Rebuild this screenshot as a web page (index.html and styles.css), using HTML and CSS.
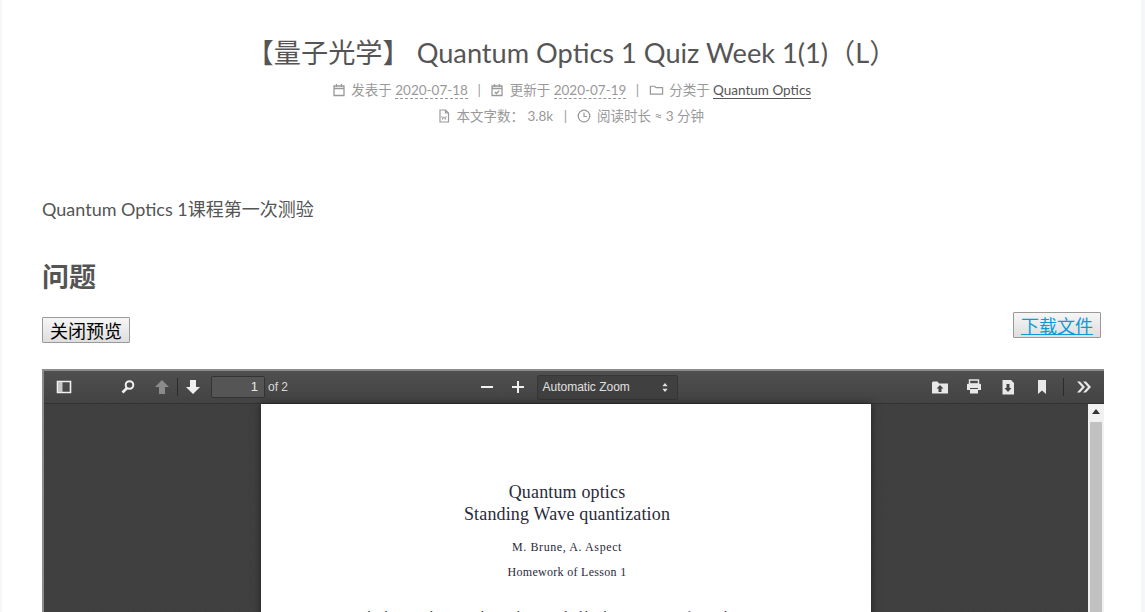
FILE: index.html
```html
<!DOCTYPE html>
<html lang="en">
<head>
  <meta charset="UTF-8">
  <meta name="viewport" content="width=device-width, initial-scale=1.0">
  <title>Quantum Optics 1 Quiz Week 1(1)</title>
  <link rel="stylesheet" href="styles.css">
</head>
<body>
  <main class="post">
    <!-- post header -->
    <header class="post-header">
      <h1>【量子光学】 Quantum Optics 1 Quiz Week 1(1)（L）</h1>
      <div class="meta">
        <span class="meta-item">
          <svg class="meta-icon" viewBox="0 0 14 14"><path d="M2 3h10v9.500H2zM2 5.500h10M4.500 1v3M9.500 1v3" fill="none" stroke="currentColor" stroke-width="1.300"/></svg>
          <span>发表于</span> <a class="date-link">2020-07-18</a>
        </span>
        <span class="meta-sep">|</span>
        <span class="meta-item">
          <svg class="meta-icon" viewBox="0 0 14 14"><path d="M2 3h10v9.500H2zM2 5.500h10M4.500 1v3M9.500 1v3M4.800 9l1.600 1.500 2.800-2.800" fill="none" stroke="currentColor" stroke-width="1.300"/></svg>
          <span>更新于</span> <a class="date-link">2020-07-19</a>
        </span>
        <span class="meta-sep">|</span>
        <span class="meta-item">
          <svg class="meta-icon wide" viewBox="0 0 16 14"><path d="M1.500 3h4.500l1.500 1.500h7v7h-13z" fill="none" stroke="currentColor" stroke-width="1.300"/></svg>
          <span>分类于</span> <a class="cat-link">Quantum Optics</a>
        </span>
      </div>
      <div class="meta words">
        <span class="meta-item">
          <svg class="meta-icon" viewBox="0 0 14 14"><path d="M3 1h5.500L11.500 4v9H3zM8.500 1v3h3" fill="none" stroke="currentColor" stroke-width="1.200"/><path d="M4.800 7l.8 3.500.9-2.500h.9l.9 2.500.8-3.500" fill="none" stroke="currentColor" stroke-width=".8"/></svg>
          <span>本文字数： 3.8k</span>
        </span>
        <span class="meta-sep">|</span>
        <span class="meta-item">
          <svg class="meta-icon" viewBox="0 0 14 14"><circle cx="7" cy="7" r="5.800" fill="none" stroke="currentColor" stroke-width="1.300"/><path d="M7 3.500V7.500h3" fill="none" stroke="currentColor" stroke-width="1.200"/></svg>
          <span>阅读时长 ≈ 3 分钟</span>
        </span>
      </div>
    </header>

    <p class="intro">Quantum Optics 1课程第一次测验</p>
    <h2>问题</h2>

    <div class="file-actions">
      <button class="plain-btn" type="button">关闭预览</button>
      <button class="plain-btn download" type="button"><a>下载文件</a></button>
    </div>

    <!-- embedded pdf viewer -->
    <section class="viewer">
      <div class="toolbar">
        <div class="tool-group left">
          <svg class="tool sidebar-tool" viewBox="0 0 16 16"><path d="M1.500 2.500h13v11h-13z" fill="none" stroke="#f0f0f0" stroke-width="1.600"/><path d="M2 3h4.500v10H2z" fill="#c8c8c8"/></svg>
          <svg class="tool search-tool" viewBox="0 0 16 16"><circle cx="9.500" cy="6" r="3.800" fill="none" stroke="#f0f0f0" stroke-width="2"/><path d="M7 9l-4.500 4.500" stroke="#f0f0f0" stroke-width="2.600"/></svg>
          <svg class="tool arrow-tool dim" viewBox="0 0 16 16"><path d="M8 1l7 7h-4v7H5V8H1z" fill="#f0f0f0"/></svg>
          <span class="tool-sep"></span>
          <svg class="tool arrow-tool" viewBox="0 0 16 16"><path d="M8 15l7-7h-4V1H5v7H1z" fill="#f0f0f0"/></svg>
          <span class="page-input">1</span>
          <span class="page-count">of 2</span>
        </div>
        <div class="tool-group middle">
          <svg class="tool zoom-tool" viewBox="0 0 12 12"><path d="M0 6h12" stroke="#f0f0f0" stroke-width="2"/></svg>
          <span class="tool-sep faint"></span>
          <svg class="tool zoom-tool" viewBox="0 0 12 12"><path d="M0 6h12M6 0v12" stroke="#f0f0f0" stroke-width="2"/></svg>
          <div class="zoom-select">
            <span>Automatic Zoom</span>
            <svg class="select-arrows" viewBox="0 0 6 10"><path d="M3 0l3 3.500H0zM3 10L0 6.500h6z" fill="#e0e0e0"/></svg>
          </div>
        </div>
        <div class="tool-group right">
          <svg class="tool file-tool" viewBox="0 0 16 16"><path d="M0 3.500V14.500h16V4.500H7L5.500 2.500H1z" fill="#e8e8e8"/><path d="M8 6l3.500 3.500H9.500V13h-3V9.500H4.500z" fill="#444"/></svg>
          <svg class="tool file-tool" viewBox="0 0 16 16"><path d="M3.500 1h9v4h-9z" fill="none" stroke="#e8e8e8" stroke-width="1.400"/><path d="M1 5.500Q1 4.800 2 4.800h12q1 0 1 .8V11h-3V9H4v2H1z" fill="#e8e8e8"/><path d="M4 10h8v4.500H4z" fill="#e8e8e8"/></svg>
          <svg class="tool file-tool" viewBox="0 0 16 16"><path d="M2.500 1H11l3 3v11.500H2.500z" fill="#e8e8e8"/><path d="M6.500 5h3v4h2L8 13 4.500 9h2z" fill="#444"/></svg>
          <svg class="tool file-tool" viewBox="0 0 16 16"><path d="M4 1h8v14l-4-3.500L4 15z" fill="#e8e8e8"/></svg>
          <span class="tool-sep"></span>
          <svg class="tool more-tool" viewBox="0 0 16 16"><path d="M1 2.500h3l5 5.500-5 5.500H1l5-5.500zM7 2.500h3l5 5.500-5 5.500H7l5-5.500z" fill="#e8e8e8"/></svg>
        </div>
      </div>
      <div class="viewer-body">
        <div class="pdf-area">
          <article class="pdf-page">
            <div class="pdf-title">Quantum optics</div>
            <div class="pdf-title">Standing Wave quantization</div>
            <div class="pdf-author">M. Brune, A. Aspect</div>
            <div class="pdf-author second">Homework of Lesson 1</div>
            <p class="pdf-text">This homework is to work out what is implied by the quantization of a standing wave.</p>
          </article>
        </div>
        <div class="scrollbar">
          <svg class="scroll-up" viewBox="0 0 8 5"><path d="M4 0l4 5H0z" fill="#333"/></svg>
          <div class="scroll-thumb"></div>
        </div>
      </div>
    </section>
  </main>
</body>
</html>
```

FILE: styles.css
```css
* {
  box-sizing: border-box;
}

html, body {
  height: 612px;
  overflow: hidden;
}

body {
  margin: 0;
  background-color: #f5f7f9;
  font-family: Lato, "Noto Sans CJK SC", sans-serif;
  color: #555;
}

.post {
  margin: 0 4px 0 2px;
  padding: 0 37px 0 40px;
  height: 612px;
  background-color: #fff;
}

/* header */
.post-header {
  padding-top: 34px;
  text-align: center;
  padding-right: 3px;
}

.post-header h1 {
  margin: 0;
  font-size: 27.2px;
  font-weight: 400;
  line-height: 38px;
  color: #555;
}

.meta {
  font-size: 13.5px;
  line-height: 26px;
  color: #999;
}

.post-header h1 + .meta {
  margin-top: 5px;
}

.meta-icon {
  width: 14px;
  height: 14px;
  margin-right: 2px;
  vertical-align: -2px;
}

.meta-icon.wide {
  width: 15px;
}

.meta-sep {
  margin: 0 6px;
}

.words {
  padding-right: 2px;
}

.words .meta-sep {
  margin: 0 7px;
}

.date-link {
  border-bottom: 1px dashed #999;
}

.cat-link {
  color: #555;
  border-bottom: 1px solid #555;
}

/* body */
.intro {
  margin: 64px 0 0;
  font-size: 18px;
  line-height: 32px;
}

h2 {
  margin: 33px 0 0;
  font-size: 27px;
  font-weight: 700;
  line-height: 38px;
}

.file-actions {
  display: flex;
  justify-content: space-between;
  align-items: flex-start;
  margin-top: 21px;
  padding-right: 3px;
}

.plain-btn {
  height: 26px;
  padding: 0 7px;
  border: 1px solid #999;
  border-radius: 1px;
  background: linear-gradient(#f6f6f6, #dedede);
  font-family: "Noto Sans CJK SC", sans-serif;
  font-size: 18px;
  line-height: 22px;
  color: #000;
}

.download {
  margin-top: -5px;
}

.download a {
  color: #0a9ad8;
  text-decoration: underline;
  text-decoration-thickness: 1px;
  text-underline-offset: 1px;
}

/* pdf viewer */
.viewer {
  margin-top: 26px;
  height: 300px;
  background-color: #404040;
  border: 2px solid #8c8c8c;
  border-width: 2px 0 0 2px;
  overflow: hidden;
}

.toolbar {
  display: flex;
  justify-content: space-between;
  align-items: center;
  height: 33px;
  background: linear-gradient(#4f4f4f, #434343);
  border-bottom: 1px solid #333;
  font-family: "Liberation Sans", sans-serif;
  font-size: 12px;
  color: #d9d9d9;
}

.tool-group {
  display: flex;
  align-items: center;
}

.left {
  padding-left: 12px;
  width: 300px;
}

.tool {
  flex: none;
  width: 16px;
  height: 16px;
}

.search-tool {
  margin-left: 48px;
}

.arrow-tool {
  margin-left: 9px;
}

.dim {
  margin-left: 18px;
  opacity: 0.4;
}

.tool-sep {
  width: 1px;
  height: 18px;
  margin-left: 7px;
  background-color: #2b2b2b;
}

.tool-sep + .arrow-tool {
  margin-left: 7px;
}

.page-input {
  width: 54px;
  height: 22px;
  margin-left: 10px;
  padding-right: 6px;
  border: 1px solid #333;
  border-radius: 2px;
  background-color: #555;
  font-size: 13px;
  line-height: 20px;
  text-align: right;
  color: #e8e8e8;
}

.page-count {
  margin-left: 3px;
}

.middle {
  margin-left: -118px;
}

.zoom-tool {
  width: 12px;
  height: 12px;
}

.faint {
  margin: 0 9px;
  background-color: #4a4a4a;
}

.zoom-select {
  display: flex;
  align-items: center;
  justify-content: space-between;
  width: 141px;
  height: 25px;
  margin-left: 13px;
  padding: 0 9px 0 5px;
  border: 1px solid #363636;
  border-radius: 2px;
  background-color: #404040;
  color: #e0e0e0;
}

.select-arrows {
  width: 6px;
  height: 9px;
}

.right {
  gap: 18px;
  padding-right: 12px;
}

.right .tool-sep {
  margin: 0 -6px 0 -5px;
}

.viewer-body {
  display: flex;
  height: 240px;
}

.pdf-area {
  flex: 1;
  display: flex;
  justify-content: center;
  background-color: #3f3f3f;
  background-image: repeating-linear-gradient(45deg, rgba(255, 255, 255, 0.012) 0 1px, transparent 1px 3px);
}

.pdf-page {
  width: 610px;
  padding-left: 2px;
  background-color: #fff;
  box-shadow: 0 0 8px rgba(0, 0, 0, 0.5);
  font-family: "Liberation Serif", serif;
  color: #2a2a3a;
  text-align: center;
}

.pdf-title {
  font-size: 18px;
  line-height: 22px;
  letter-spacing: 0.15px;
}

.pdf-title:first-child {
  margin-top: 77px;
}

.pdf-author {
  margin-top: 15px;
  font-size: 12px;
  line-height: 14px;
  letter-spacing: 0.6px;
}

.pdf-author.second {
  margin-top: 11px;
  letter-spacing: 0.3px;
}

.pdf-text {
  margin: 30px 0 0;
  font-size: 12px;
  line-height: 14px;
}

.scrollbar {
  flex: none;
  width: 16px;
  background-color: #f1f1f1;
}

.scroll-up {
  display: block;
  width: 8px;
  height: 5px;
  margin: 5px auto 0;
}

.scroll-thumb {
  height: 200px;
  margin: 8px 2px 0;
  background-color: #c1c1c1;
}
```
